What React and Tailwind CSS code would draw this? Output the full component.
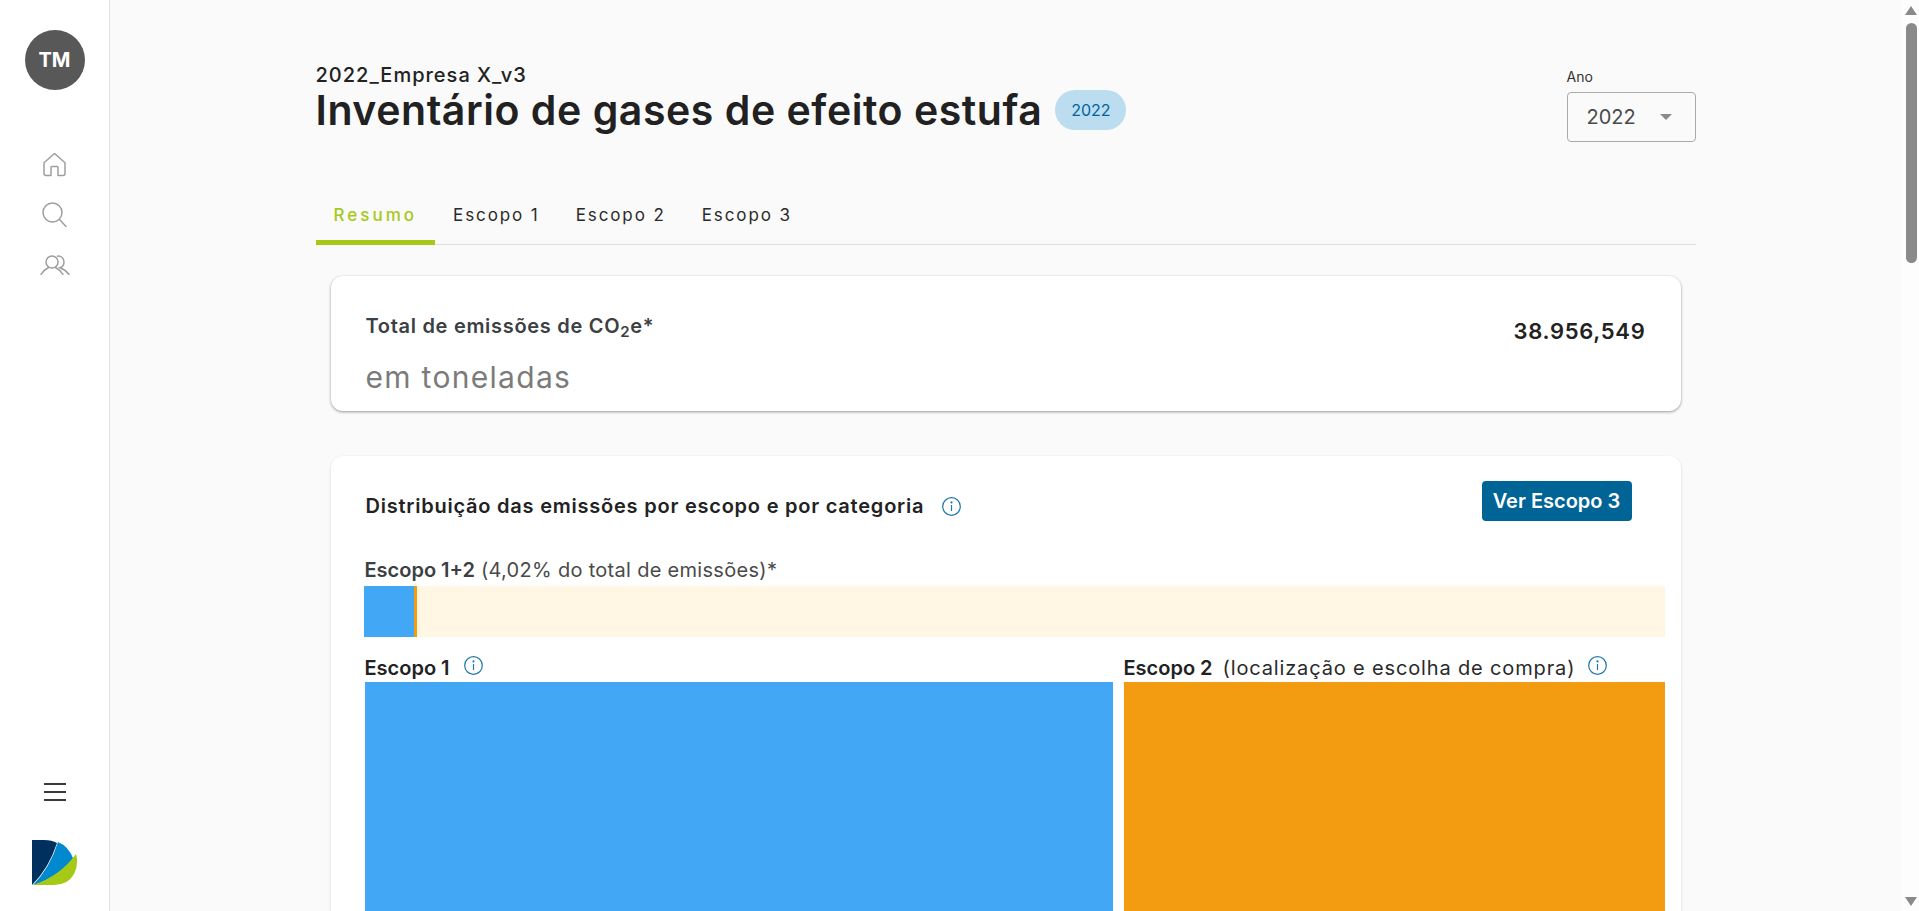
const font = "font-['Inter','Noto_Sans',sans-serif]"

function InfoIcon({ className }) {
  return (
    <svg className={className} width="19" height="19" viewBox="0 0 19 19" fill="none" stroke="#1f78ab" strokeWidth="1.2">
      <circle cx="9.5" cy="9.5" r="8.8" />
      <path d="M9.5 8v6" />
      <circle cx="9.5" cy="5.4" r="0.5" fill="#1f78ab" />
    </svg>
  )
}

function Sidebar() {
  return (
    <aside className="w-[110px] shrink-0 h-full bg-white border-r border-[#e2e2e2] flex flex-col items-center pt-[30px] pb-[25px]">
      <div className="w-[60px] h-[60px] rounded-full bg-[#585858] text-white font-bold text-[20px] flex items-center justify-center">TM</div>
      <div className="mt-[62px] flex flex-col items-center">
        <svg width="25" height="25" viewBox="0 0 25 25" fill="none" stroke="#9e9e9e" strokeWidth="1.5" strokeLinejoin="round">
          <path d="M2 21.5V10.8L12.5 1.5 23 10.800V21.500Q23 23.500 21 23.500H16V15.500Q16 14.500 15 14.500H10Q9 14.500 9 15.500V23.500H4Q2 23.500 2 21.500Z" />
        </svg>
        <svg className="mt-[25px]" width="25" height="25" viewBox="0 0 25 25" fill="none" stroke="#9e9e9e" strokeWidth="1.5" strokeLinecap="round">
          <circle cx="10.500" cy="10.500" r="9.500" />
          <path d="M17.500 17.500L24 24.500" />
        </svg>
        <svg className="mt-[28px]" width="30" height="20" viewBox="0 0 30 20" fill="none" stroke="#9e9e9e" strokeWidth="1.5" strokeLinecap="round">
          <circle cx="12" cy="7" r="6" />
          <path d="M1 19.500C3 16 6 13.800 8.500 12.500M15.500 12.500C18 13.800 21 16 23 19.500" />
          <path d="M17.500 1.200C21 .6 24 3.200 24 7C24 10 22 12.200 20 12.700C23 13.800 26.500 16 29 19.500" />
        </svg>
      </div>
      <div className="mt-auto flex flex-col items-center">
        <div className="w-[22px] flex flex-col gap-[6px]">
          <div className="h-[2px] bg-[#3a3a3a]" />
          <div className="h-[2px] bg-[#3a3a3a]" />
          <div className="h-[2px] bg-[#3a3a3a]" />
        </div>
        <svg className="mt-[39px]" width="46" height="46" viewBox="0 0 46 46">
          <path d="M0 0H12Q20 0 25 3Q17 28 0 45Z" fill="#00305e" />
          <path d="M26 2Q36 6 41 18L30 36L1 45Q18 28 26 2Z" fill="#0089cf" />
          <path d="M44 14Q47 24 42 34Q36 45 22 45H1Q28 36 44 14Z" fill="#a6c916" />
        </svg>
      </div>
    </aside>
  )
}

function Scrollbar() {
  return (
    <div className="w-[18px] shrink-0 h-full bg-[#fdfdfd] flex flex-col items-center pl-[2px]">
      <div className="mt-[6px] w-0 h-0 border-x-[6px] border-x-transparent border-b-[9px] border-b-[#8a8a8a]" />
      <div className="mt-[8px] w-[11px] h-[240px] rounded-full bg-[#8a8a8a]" />
      <div className="mt-auto mb-[5px] w-0 h-0 border-x-[6px] border-x-transparent border-t-[9px] border-t-[#8a8a8a]" />
    </div>
  )
}

function Tab({ label, active }) {
  return (
    <div className={`h-[68px] px-[18px] flex items-center text-[17px] pt-[14px] border-b-[5px] ${active ? 'tracking-[3px] text-[#a6c916] font-medium border-[#a6c916]' : 'tracking-[1.9px] text-[#2a2a2a] border-transparent'}`}>
      {label}
    </div>
  )
}

export default function App() {
  return (
    <div className={`h-screen flex overflow-hidden bg-[#fafafa] ${font}`}>
      <Sidebar />
      <main className="flex-1 h-full overflow-hidden">
        <div className="w-[1380px] mx-auto">
          <header className="flex justify-between pt-[62px] h-[177px]">
            <div>
              <p className="text-[20px] leading-[26px] font-medium text-[#222] tracking-[1px]">2022_Empresa X_v3</p>
              <div className="flex items-center gap-[13px] -mt-[1px]">
                <h1 className="text-[41px] leading-[46px] font-semibold text-[#212121] tracking-[0.55px]">Inventário de gases de efeito estufa</h1>
                <span className="h-[40px] w-[71px] rounded-[20px] bg-[#bcdcf0] text-[#00659b] text-[16px] flex items-center justify-center">2022</span>
              </div>
            </div>
            <div className="w-[129px] mt-[5px]">
              <p className="text-[14px] leading-[20px] text-[#333]">Ano</p>
              <div className="mt-[5px] h-[50px] border border-[#aaaaaa] rounded-[4px] flex items-center pl-[19px]">
                <span className="text-[20px] text-[#4a4a4a]">2022</span>
                <span className="ml-[24px] w-0 h-0 border-x-[6.5px] border-x-transparent border-t-[6px] border-t-[#8a8a8a]" />
              </div>
            </div>
          </header>
          <nav className="flex border-b border-[#e0e0e0] h-[68px]">
            <Tab label="Resumo" active />
            <Tab label="Escopo 1" />
            <Tab label="Escopo 2" />
            <Tab label="Escopo 3" />
          </nav>
          <div className="px-[15px] pt-[31px] flex flex-col gap-[45px]">
            <section className="h-[135px] bg-white rounded-[12px] shadow-[0_1px_3px_rgba(0,0,0,0.4)] pl-[35px] pr-[35px] flex justify-between">
              <div>
                <p className="mt-[37px] text-[20px] leading-[26px] font-semibold text-[#3c4043] tracking-[0.7px]">Total de emissões de CO<sub>2</sub>e*</p>
                <p className="mt-[22px] text-[30px] leading-[32px] text-[#7b7b7b] tracking-[1.3px]">em toneladas</p>
              </div>
              <p className="mt-[40px] text-[22px] leading-[30px] font-semibold text-[#222] tracking-[0.7px]">38.956,549</p>
            </section>
            <section className="bg-white rounded-[12px] shadow-[0_1px_3px_rgba(0,0,0,0.15)] pl-[33px] pr-[16px] h-[600px]">
              <div className="flex items-start justify-between pl-[2px] pr-[33px] pt-[25px] h-[101px]">
                <div className="flex items-center gap-[18px] pt-[10px]">
                  <h2 className="text-[20px] leading-[30px] font-semibold text-[#222] tracking-[0.77px]">Distribuição das emissões por escopo e por categoria</h2>
                  <InfoIcon />
                </div>
                <button className="w-[150px] h-[40px] rounded-[4px] bg-[#006497] text-white text-[20px] font-semibold">Ver Escopo 3</button>
              </div>
              <p className="pl-[1px] h-[29px] text-[20px] leading-[26px] text-[#4a4a4a] tracking-[0.3px]"><span className="font-semibold text-[#3c4043] tracking-normal">Escopo 1+2</span> (4,02% do total de emissões)*</p>
              <div className="flex h-[51px] bg-[#fff6e3]">
                <div className="w-[50px] bg-[#42a8f5]" />
                <div className="w-[3px] bg-[#f39c12]" />
              </div>
              <div className="mt-[17px] pl-[1px] flex gap-[11px]">
                <div className="w-[748px]">
                  <div className="flex items-center gap-[14px] h-[29px] -mt-[1px]">
                    <span className="text-[20px] font-semibold text-[#222]">Escopo 1</span>
                    <InfoIcon className="-mt-[4px]" />
                  </div>
                  <div className="h-[300px] bg-[#42a8f5]" />
                </div>
                <div className="w-[541px]">
                  <div className="flex items-center h-[29px] -mt-[1px] text-[20px] text-[#2a2a2a]">
                    <span className="font-semibold text-[#222]">Escopo 2</span>
                    <span className="ml-[10px] tracking-[0.85px]">(localização e escolha de compra)</span>
                    <InfoIcon className="ml-[13px] -mt-[4px]" />
                  </div>
                  <div className="h-[300px] bg-[#f39c12]" />
                </div>
              </div>
            </section>
          </div>
        </div>
      </main>
      <Scrollbar />
    </div>
  )
}
